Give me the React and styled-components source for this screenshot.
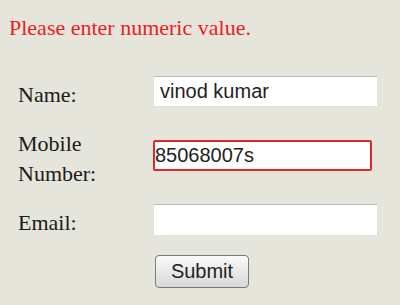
import React from "react";
import styled, { createGlobalStyle } from "styled-components";

const GlobalStyle = createGlobalStyle`
  html, body {
    margin: 0;
    padding: 0;
    background: #e6e5db;
  }
`;

const Page = styled.div`
  width: 400px;
  height: 305px;
  background: #e6e5db;
  padding: 15px 0 0 9px;
  box-sizing: border-box;
  font-family: "Liberation Serif", "Times New Roman", serif;
  overflow: hidden;
`;

const ErrorText = styled.p`
  margin: 0;
  color: #ee1c1c;
  font-size: 22px;
  line-height: 25px;
`;

const Form = styled.form`
  display: grid;
  grid-template-columns: 135px 225px;
  row-gap: 13px;
  align-items: center;
  margin: 33.5px 0 0 9px;
`;

const Label = styled.label`
  color: #1b1b1b;
  font-size: 22px;
  line-height: 30px;
  padding-top: 6px;
`;

const Input = styled.input`
  box-sizing: border-box;
  width: ${(p) => p.$width || 225}px;
  height: ${(p) => p.$height || 31}px;
  margin: 0;
  padding: 0 0 0 ${(p) => (p.$invalid ? 0 : 6)}px;
  background: #ffffff;
  border: ${(p) => (p.$invalid ? "2px solid #e3262b" : "1px solid #e2e2dc")};
  border-top-color: ${(p) => (p.$invalid ? "#e3262b" : "#b9b9b4")};
  border-radius: 2px;
  font-family: "Liberation Sans", Arial, sans-serif;
  font-size: 20px;
  color: #222;
  outline: none;
`;

const ButtonCell = styled.div`
  grid-column: 2;
  padding-top: 4px;
`;

const SubmitButton = styled.button`
  box-sizing: border-box;
  width: 94px;
  height: 33px;
  margin: 0 0 0 2px;
  padding: 0;
  border: 1.5px solid #7a7a7a;
  border-radius: 4px;
  background: linear-gradient(#fbfbfb, #e9e9e9 50%, #d8d8d8);
  font-family: "Liberation Sans", Arial, sans-serif;
  font-size: 20px;
  color: #222;
`;

export default function App() {
  return (
    <Page>
      <GlobalStyle />
      <ErrorText>Please enter numeric value.</ErrorText>
      <Form onSubmit={(e) => e.preventDefault()}>
        <Label>Name:</Label>
        <Input defaultValue="vinod kumar" />

        <Label>
          Mobile
          <br />
          Number:
        </Label>
        <Input defaultValue="85068007s" $invalid $width={219} />

        <Label>Email:</Label>
        <Input $height={32} />

        <ButtonCell>
          <SubmitButton type="submit">Submit</SubmitButton>
        </ButtonCell>
      </Form>
    </Page>
  );
}
